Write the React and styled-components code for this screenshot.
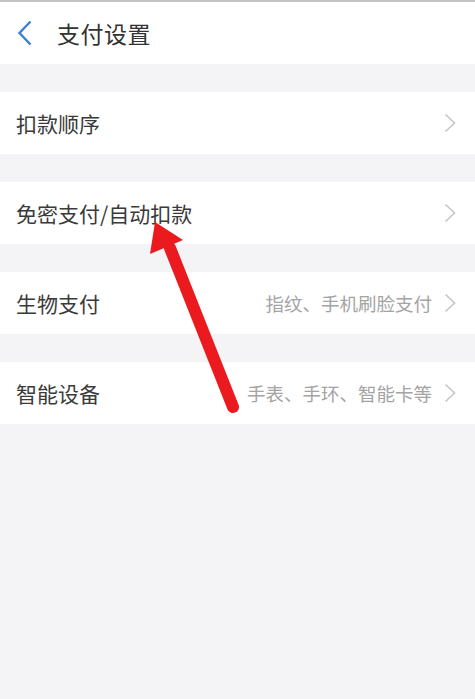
import React from 'react';
import styled, { createGlobalStyle } from 'styled-components';

const GlobalStyle = createGlobalStyle`
  html, body {
    margin: 0;
    padding: 0;
    background: #f4f4f6;
  }
  body {
    font-family: 'Noto Sans CJK SC', 'Noto Sans', sans-serif;
  }
`;

const Page = styled.div`
  position: relative;
  min-height: 699px;
  box-sizing: border-box;
  border-top: 2px solid #c4c4c6;
  background: #f4f4f6;
  overflow: hidden;
`;

const Header = styled.div`
  height: 62px;
  background: #fff;
  display: flex;
  align-items: center;
  padding-left: 17px;
`;

const BackButton = styled.div`
  width: 18px;
  height: 26px;
  display: flex;
  align-items: center;
  margin-right: 22px;
`;

const Title = styled.h1`
  margin: 0;
  font-size: 23px;
  font-weight: 400;
  color: #333;
  letter-spacing: 0.5px;
`;

const List = styled.div`
  display: flex;
  flex-direction: column;
  gap: 28px;
  padding-top: 28px;
`;

const Row = styled.div`
  height: 62px;
  background: #fff;
  display: flex;
  align-items: center;
  padding: 0 19px 0 16px;
`;

const Label = styled.span`
  flex: 1;
  font-size: 21px;
  color: #3a3a3a;
`;

const Hint = styled.span`
  font-size: 18.5px;
  color: #a4a4a4;
  margin-right: 12px;
`;

const Overlay = styled.svg`
  position: absolute;
  left: 0;
  top: 0;
  pointer-events: none;
`;

const Chevron = () => (
  <svg width="12" height="20" viewBox="0 0 12 20">
    <path d="M1.5 1.5 L10.5 10 L1.5 18.5" fill="none" stroke="#c6c6c8" strokeWidth="1.6" />
  </svg>
);

const items = [
  { label: '扣款顺序' },
  { label: '免密支付/自动扣款' },
  { label: '生物支付', hint: '指纹、手机刷脸支付' },
  { label: '智能设备', hint: '手表、手环、智能卡等' },
];

export default function App() {
  return (
    <Page>
      <GlobalStyle />
      <Header>
        <BackButton>
          <svg width="16" height="26" viewBox="0 0 16 26">
            <path d="M13.5 1.5 L2.5 13 L13.5 24.5" fill="none" stroke="#3a80d6" strokeWidth="2.4" />
          </svg>
        </BackButton>
        <Title>支付设置</Title>
      </Header>
      <List>
        {items.map((item) => (
          <Row key={item.label}>
            <Label>{item.label}</Label>
            {item.hint && <Hint>{item.hint}</Hint>}
            <Chevron />
          </Row>
        ))}
      </List>
      <Overlay width="475" height="699" viewBox="0 0 475 699">
        <line x1="233" y1="405" x2="170" y2="246" stroke="#ea1a1f" strokeWidth="12" strokeLinecap="round" />
        <polygon points="155,220 183,238 150,252" fill="#ea1a1f" />
      </Overlay>
    </Page>
  );
}
